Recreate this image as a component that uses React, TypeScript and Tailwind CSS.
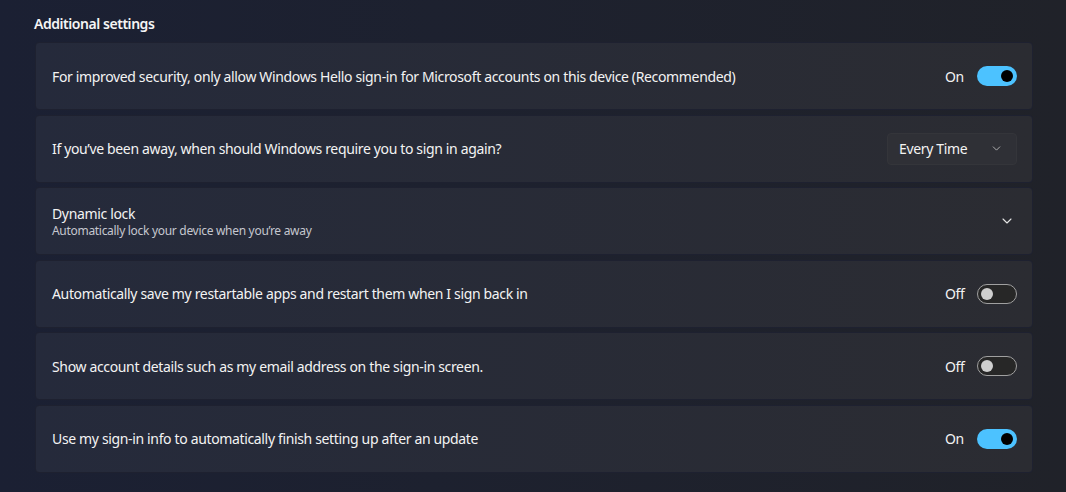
import { ChevronDown } from 'lucide-react';

type Row =
  | { kind: 'toggle'; title: string; on: boolean }
  | { kind: 'select'; title: string; value: string }
  | { kind: 'expand'; title: string; sub: string };

const rows: Row[] = [
  {
    kind: 'toggle',
    title: 'For improved security, only allow Windows Hello sign-in for Microsoft accounts on this device (Recommended)',
    on: true,
  },
  { kind: 'select', title: 'If you’ve been away, when should Windows require you to sign in again?', value: 'Every Time' },
  { kind: 'expand', title: 'Dynamic lock', sub: 'Automatically lock your device when you’re away' },
  { kind: 'toggle', title: 'Automatically save my restartable apps and restart them when I sign back in', on: false },
  { kind: 'toggle', title: 'Show account details such as my email address on the sign-in screen.', on: false },
  { kind: 'toggle', title: 'Use my sign-in info to automatically finish setting up after an update', on: true },
];

function Toggle({ on }: { on: boolean }) {
  return (
    <div className="flex items-center gap-[12px]">
      <span className="text-[14px] text-[#f3f3f3] w-[20px]">{on ? 'On' : 'Off'}</span>
      {on ? (
        <div className="w-[40px] h-[20px] rounded-full bg-[#4cc2ff] flex items-center justify-end pr-[4px]">
          <div className="w-[12px] h-[12px] rounded-full bg-black" />
        </div>
      ) : (
        <div className="w-[40px] h-[20px] rounded-full border border-[#a0a0a0] bg-[#272727] flex items-center pl-[3px]">
          <div className="w-[12px] h-[12px] rounded-full bg-[#cfcfcf]" />
        </div>
      )}
    </div>
  );
}

function Control({ row }: { row: Row }) {
  if (row.kind === 'toggle') return <Toggle on={row.on} />;
  if (row.kind === 'select')
    return (
      <div className="w-[130px] h-[32px] rounded-[4px] bg-[#2f3036] border border-[#34353a] flex items-center justify-between pl-[11px] pr-[13px]">
        <span className="text-[14px] text-[#f3f3f3]">{row.value}</span>
        <ChevronDown className="w-[13px] h-[13px] text-[#c8c8c8]" strokeWidth={1.5} />
      </div>
    );
  return <ChevronDown className="w-[16px] h-[16px] text-[#e6e6e6] mr-[2px]" strokeWidth={1.6} />;
}

export default function App() {
  return (
    <div
      className="w-[1066px] h-[492px] overflow-hidden bg-gradient-to-r from-[#1b2033] to-[#202229] text-white tracking-[-0.35px]"
      style={{ fontFamily: '"Noto Sans", "Open Sans", sans-serif' }}
    >
      <div className="pl-[35px] pr-[33px] pt-[14px]">
        <h2 className="text-[14px] font-semibold text-[#f5f5f5] ml-[-1px] leading-[20px] mb-[8px] tracking-[-0.45px]">
          Additional settings
        </h2>
        <div className="flex flex-col gap-[4.6px]">
          {rows.map((row, i) => (
            <div
              key={i}
              className="h-[68px] rounded-[4px] bg-gradient-to-r from-[#252a3b] to-[#2b2c32] border border-[#1e2130] flex items-center justify-between pl-[16px] pr-[15px]"
            >
              {row.kind === 'expand' ? (
                <div className="flex flex-col">
                  <span className="text-[14px] leading-[19px] text-[#f3f3f3]">{row.title}</span>
                  <span className="text-[12px] leading-[16px] text-[#c5c7cf] tracking-[-0.3px]">{row.sub}</span>
                </div>
              ) : (
                <span className="text-[14px] text-[#f3f3f3]">{row.title}</span>
              )}
              <Control row={row} />
            </div>
          ))}
        </div>
      </div>
    </div>
  );
}
